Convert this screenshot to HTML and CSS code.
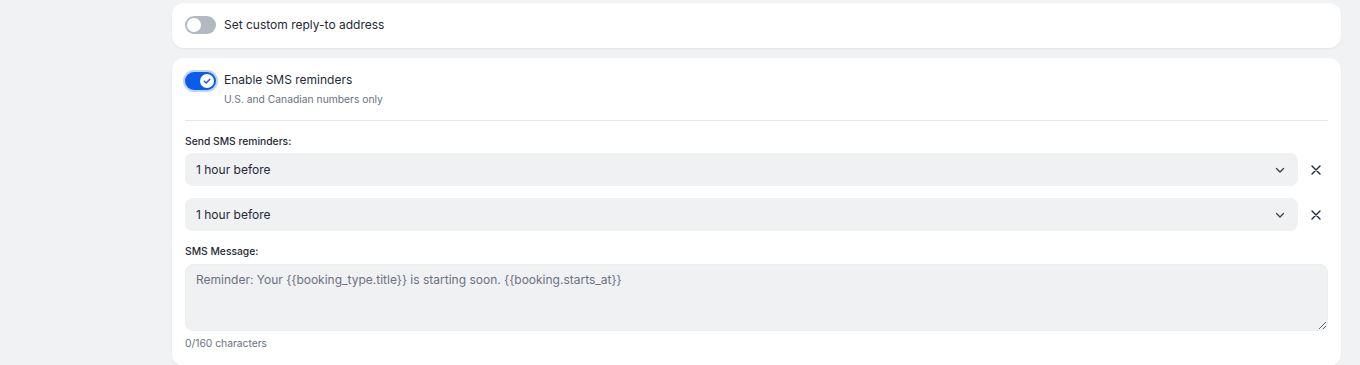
FILE: index.html
```html
<!DOCTYPE html>
<html lang="en">
<head>
  <meta charset="UTF-8">
  <title>SMS reminders</title>
  <link rel="stylesheet" href="styles.css">
</head>
<body>
  <div class="page">

    <!-- Reply-to -->
    <div class="card card-small">
      <div class="toggle-row">
        <span class="toggle"><span class="knob"></span></span>
        <span class="toggle-label">Set custom reply-to address</span>
      </div>
    </div>

    <!-- SMS reminders -->
    <div class="card">
      <div class="toggle-row">
        <span class="toggle on">
          <span class="knob">
            <svg width="10" height="10" viewBox="0 0 10 10"><path d="M2.3 5.2 L4.2 7 L7.8 3.2" fill="none" stroke="#0b5ce8" stroke-width="1.4" stroke-linecap="round" stroke-linejoin="round"/></svg>
          </span>
        </span>
        <div>
          <div class="toggle-label">Enable SMS reminders</div>
          <div class="hint">U.S. and Canadian numbers only</div>
        </div>
      </div>

      <div class="divider"></div>

      <div class="field-label">Send SMS reminders:</div>
      <div class="select-row">
        <div class="select">
          <span>1 hour before</span>
          <svg width="12" height="12" viewBox="0 0 12 12"><path d="M2.5 4.5 L6 8 L9.5 4.5" fill="none" stroke="#374151" stroke-width="1.3" stroke-linecap="round" stroke-linejoin="round"/></svg>
        </div>
        <button class="remove">
          <svg width="12" height="12" viewBox="0 0 12 12"><path d="M2 2 L10 10 M10 2 L2 10" stroke="#1f2937" stroke-width="1.4" stroke-linecap="round"/></svg>
        </button>
      </div>
      <div class="select-row second">
        <div class="select">
          <span>1 hour before</span>
          <svg width="12" height="12" viewBox="0 0 12 12"><path d="M2.5 4.5 L6 8 L9.5 4.5" fill="none" stroke="#374151" stroke-width="1.3" stroke-linecap="round" stroke-linejoin="round"/></svg>
        </div>
        <button class="remove">
          <svg width="12" height="12" viewBox="0 0 12 12"><path d="M2 2 L10 10 M10 2 L2 10" stroke="#1f2937" stroke-width="1.4" stroke-linecap="round"/></svg>
        </button>
      </div>

      <div class="field-label msg-label">SMS Message:</div>
      <textarea class="message" placeholder="Reminder: Your {{booking_type.title}} is starting soon. {{booking.starts_at}}"></textarea>
      <div class="hint counter">0/160 characters</div>
    </div>

  </div>
</body>
</html>
```

FILE: styles.css
```css
/* Base */
body {
  margin: 0;
  background-color: #f1f2f4;
  font-family: Inter, "Noto Sans", sans-serif;
  color: #1f2937;
}

.page {
  width: 1169px;
  margin-left: 172px;
  padding-top: 3px;
}

/* Cards */
.card {
  background-color: #ffffff;
  border-radius: 12px;
  padding: 12px 13px 15px;
  margin-bottom: 10px;
  box-shadow: 0 1px 2px rgba(0, 0, 0, 0.06);
}

.card-small {
  padding: 12px 13px 13px;
}

/* Toggle */
.toggle-row {
  display: flex;
  align-items: flex-start;
  gap: 8px;
}

.card-small .toggle-row {
  align-items: center;
}

.toggle {
  width: 31px;
  height: 18px;
  border-radius: 9px;
  background-color: #b3b9c1;
  display: flex;
  align-items: center;
  padding: 0 2px;
  box-sizing: border-box;
  flex-shrink: 0;
}

.toggle-row .toggle.on {
  margin-top: 2px;
}

.toggle .knob {
  width: 14px;
  height: 14px;
  border-radius: 50%;
  background-color: #ffffff;
  display: flex;
  align-items: center;
  justify-content: center;
}

.toggle.on {
  background-color: #0b5ce8;
  justify-content: flex-end;
  box-shadow: 0 0 0 2px #bcd3fb;
}

.toggle-label {
  font-size: 12px;
  line-height: 20px;
}

.hint {
  font-size: 10.3px;
  line-height: 16px;
  color: #6b7280;
  margin-top: 1px;
}

.divider {
  height: 1px;
  background-color: #e5e7eb;
  margin: 13px 0 12px;
}

/* Fields */
.field-label {
  font-size: 10.3px;
  font-weight: 500;
  line-height: 16px;
  margin-bottom: 4px;
}

.msg-label {
  margin-top: 12px;
  margin-bottom: 5px;
}

.select-row {
  display: flex;
  align-items: center;
  gap: 6px;
}

.select-row.second {
  margin-top: 12px;
}

.select {
  flex: 1;
  height: 33px;
  border-radius: 8px;
  background-color: #f0f1f3;
  display: flex;
  align-items: center;
  justify-content: space-between;
  padding: 0 12px 0 11px;
  font-size: 12px;
}

.remove {
  width: 24px;
  height: 24px;
  border: none;
  background: none;
  padding: 0;
  display: flex;
  align-items: center;
  justify-content: center;
}

.message {
  display: block;
  width: 100%;
  height: 67px;
  box-sizing: border-box;
  border: 1px solid #eceef0;
  border-radius: 8px;
  background-color: #f0f1f3;
  padding: 6px 10px;
  font-family: Inter, "Noto Sans", sans-serif;
  font-size: 12px;
  line-height: 18px;
  resize: vertical;
}

.message::placeholder {
  color: #6b7280;
}

.counter {
  margin-top: 4px;
}
```
